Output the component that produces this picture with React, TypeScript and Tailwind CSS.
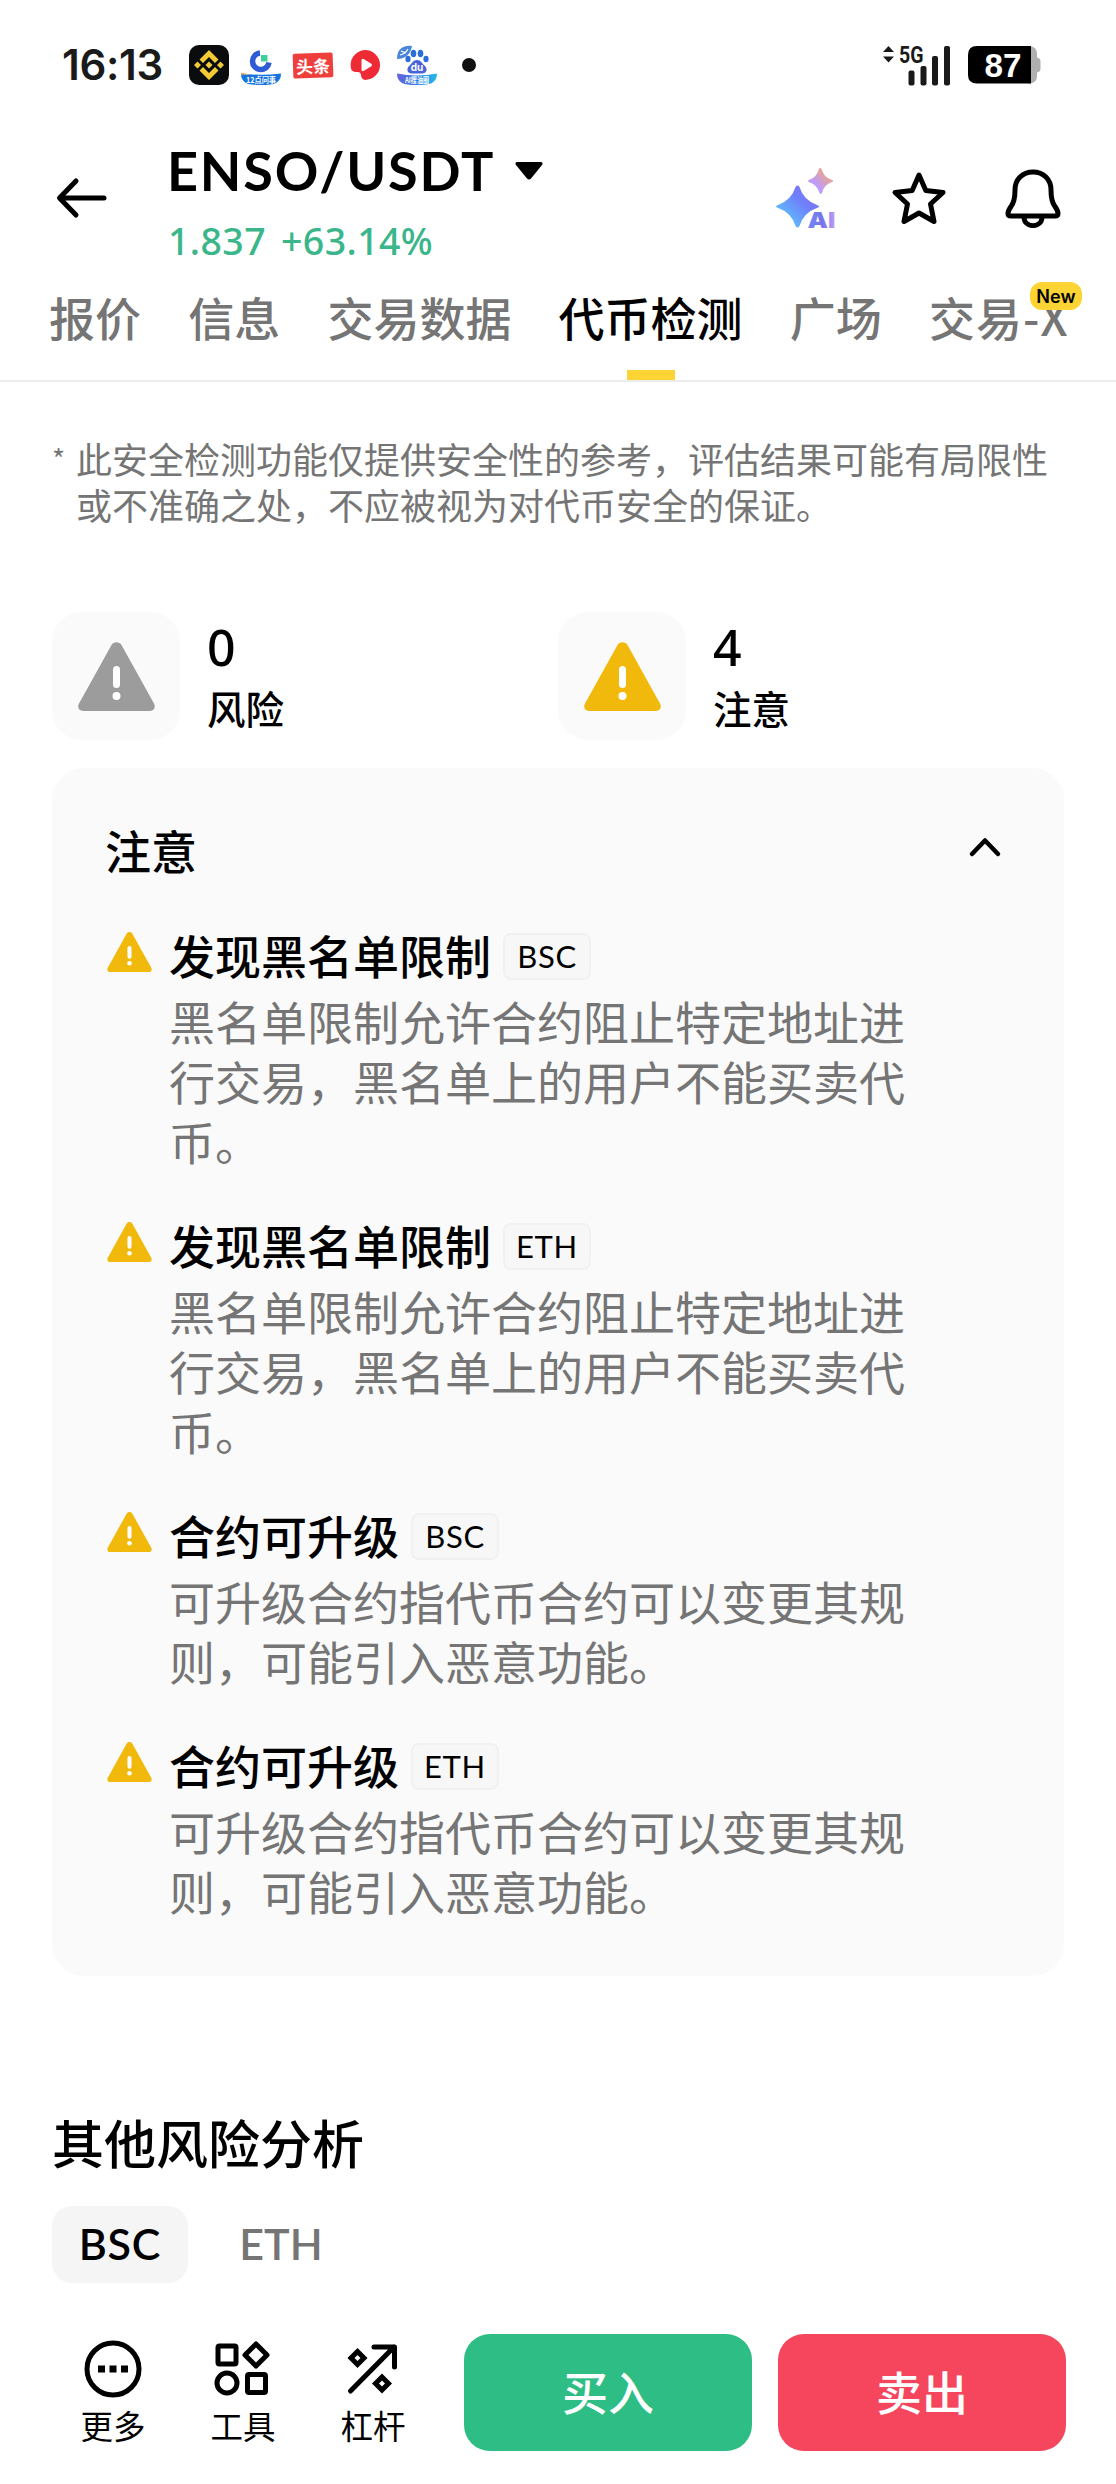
// Token safety check page for a trading pair: status bar, pair header,
// section tabs, the risk / attention summary and the bottom trade bar.

import type { ReactNode } from "react";

type Finding = {
  title: string;
  chain: "BSC" | "ETH";
  lines: string[];
};

const BLACKLIST = ["黑名单限制允许合约阻止特定地址进", "行交易，黑名单上的用户不能买卖代", "币。"];
const UPGRADABLE = ["可升级合约指代币合约可以变更其规", "则，可能引入恶意功能。"];

const FINDINGS: Finding[] = [
  { title: "发现黑名单限制", chain: "BSC", lines: BLACKLIST },
  { title: "发现黑名单限制", chain: "ETH", lines: BLACKLIST },
  { title: "合约可升级", chain: "BSC", lines: UPGRADABLE },
  { title: "合约可升级", chain: "ETH", lines: UPGRADABLE },
];

const TABS: Array<{ label: string; active?: boolean; badge?: string }> = [
  { label: "报价" },
  { label: "信息" },
  { label: "交易数据" },
  { label: "代币检测", active: true },
  { label: "广场" },
  { label: "交易-X", badge: "New" },
];

export default function App() {
  return (
    <div className="flex h-[2484px] w-[1116px] flex-col overflow-hidden bg-white font-['Noto_Sans_CJK_SC',sans-serif] text-black">
      <StatusBar />
      <PairHeader />
      <TabBar />
      <main className="flex flex-1 flex-col px-[52px]">
        <Notice />
        <div className="mt-[85px] grid grid-cols-2">
          <Summary count="0" label="风险" tone="text-[#9c9c9c]" />
          <Summary count="4" label="注意" tone="text-[#f0b90b]" />
        </div>
        <FindingPanel />
        <h2 className="mt-[136px] text-[52px] leading-[60px] font-medium">其他风险分析</h2>
        <div className="mt-[34px] flex items-center gap-[27px] font-['Lato',sans-serif] text-[43px] font-semibold">
          <span className="flex h-[77px] w-[136px] items-center justify-center rounded-[20px] bg-[#f5f5f5] tracking-[0.800px]">
            BSC
          </span>
          <span className="flex h-[77px] w-[132px] items-center justify-center text-[#757575]">ETH</span>
        </div>
      </main>
      <TradeBar />
    </div>
  );
}

function StatusBar() {
  return (
    <div className="flex h-[130px] items-center pr-[75px] pl-[62px]">
      <span className="w-[127px] font-['Inter',sans-serif] text-[42px] leading-none font-semibold tracking-[-0.3px] text-[#1a1a1a]">
        16:13
      </span>
      <BinanceIcon />
      <RingIcon />
      <span className="ml-3 flex h-[25px] w-10 -rotate-2 items-center justify-center rounded-[2px] bg-[#ee3f3d] text-[17px] leading-none font-bold text-white">
        头条
      </span>
      <PlayIcon />
      <BaiduIcon />
      <span className="ml-[25px] size-[14px] rounded-full bg-[#111]" />
      <SignalIcon />
      <BatteryIcon />
    </div>
  );
}

function PairHeader() {
  return (
    <header className="flex h-[136px] items-center pr-[53px] pl-[54px]">
      <svg width="56" height="48" viewBox="0 0 56 48" fill="none" stroke="currentColor" strokeWidth="5" strokeLinecap="round" strokeLinejoin="round">
        <path d="M50 24H6M22 7L5.500 24L22 41" />
      </svg>
      <div className="ml-[57px] flex flex-col gap-[18px] pt-2">
        <div className="flex items-center">
          <h1 className="font-['Lato',sans-serif] text-[54px] leading-[60px] font-bold tracking-[1.8px]">ENSO/USDT</h1>
          <svg className="ml-[20px]" width="28" height="18" viewBox="0 0 28 18" fill="currentColor">
            <path d="M2 0H26Q28.500 .5 27 3L16 16.500Q14 18.500 12 16.500L1 3Q-.5 .5 2 0Z" />
          </svg>
        </div>
        <div className="flex gap-[15px] pl-px font-['Noto_Sans',sans-serif] text-[37.500px] leading-[44px] font-medium tracking-[0.400px] text-[#3bb68a]">
          <span>1.837</span>
          <span>+63.14%</span>
        </div>
      </div>
      <div className="ml-auto flex items-center">
        <SparkIcon />
        <svg className="ml-[53px]" width="56" height="56" viewBox="0 0 56 56" fill="none" stroke="currentColor" strokeWidth="5" strokeLinejoin="round">
          <path d="M28 5L34.800 20.500L52 22.500L39.500 34L43 51.500L28 43L13 51.500L16.500 34L4 22.500L21.200 20.500Z" />
        </svg>
        <svg className="ml-[56px]" width="60" height="60" viewBox="0 0 60 60" fill="none" stroke="currentColor" strokeWidth="5" strokeLinejoin="round">
          <path d="M30 4C19.500 4 12 11.500 12 22C12 29 11.500 34 8 38.500C5.500 42 5 43 5 45.500Q5 48 8 48H52Q55 48 55 45.500C55 43 54.500 42 52 38.500C48.500 34 48 29 48 22C48 11.500 40.500 4 30 4Z" />
          <path d="M21 49C21 60.500 39 60.500 39 49" />
        </svg>
      </div>
    </header>
  );
}

function TabBar() {
  return (
    <nav className="flex h-[116px] gap-[47.200px] border-b-2 border-[#ededed] pt-[20px] pl-[49px] whitespace-nowrap">
      {TABS.map((tab) => (
        <div key={tab.label} className="relative flex flex-col items-center justify-between">
          <span
            className={`text-[46px] leading-[60px] font-medium ${tab.active ? "text-black" : "text-[#757575]"} ${tab.badge ? "tracking-[1px]" : ""}`}
          >
            {tab.label}
          </span>
          {tab.active && <span className="h-[10px] w-12 bg-[#fcd535]" />}
          {tab.badge && (
            <span className="absolute -top-[4px] left-[101px] flex h-7 w-[52px] items-center justify-center rounded-[12px] bg-[#fcd535] font-['Inter',sans-serif] text-[18px] font-semibold text-black">
              {tab.badge}
            </span>
          )}
        </div>
      ))}
    </nav>
  );
}

function Notice() {
  return (
    <div className="mt-[53px] flex gap-[14px] text-[36px] leading-[46px] text-[#757575]">
      <span className="w-[10px] text-[28px] leading-[46px]">*</span>
      <p className="whitespace-nowrap">
        此安全检测功能仅提供安全性的参考，评估结果可能有局限性
        <br />
        或不准确之处，不应被视为对代币安全的保证。
      </p>
    </div>
  );
}

function Summary({ count, label, tone }: { count: string; label: string; tone: string }) {
  return (
    <div className="flex items-center gap-[27px]">
      <div className={`flex size-32 items-center justify-center rounded-[30px] bg-[#fafafa] ${tone}`}>
        <WarningTriangle className="h-[69px] w-[77px]" />
      </div>
      <div className="flex flex-col pt-[2px]">
        <span className="font-['Noto_Sans',sans-serif] text-[50px] leading-[60px] font-medium">{count}</span>
        <span className="text-[38.500px] leading-[60px] font-medium">{label}</span>
      </div>
    </div>
  );
}

function FindingPanel() {
  return (
    <section className="mt-[28px] h-[1208px] rounded-[32px] bg-[#fafafa] pt-[51px] pr-[62px] pl-[53px]">
      <div className="flex items-center justify-between">
        <h2 className="text-[46px] leading-[60px] font-medium">注意</h2>
        <svg width="34" height="24" viewBox="0 0 34 24" fill="none" stroke="currentColor" strokeWidth="4.500" strokeLinecap="round" strokeLinejoin="round">
          <path d="M4 17L17 3.500L30 17" />
        </svg>
      </div>
      <ul className="mt-[45px] flex flex-col gap-[44px]">
        {FINDINGS.map((finding, i) => (
          <li key={i} className="flex gap-[17px]">
            <WarningTriangle className="mt-[8px] ml-[2px] h-[40px] w-[45px] text-[#f0b90b]" />
            <div className="flex flex-col gap-[6px]">
              <div className="flex items-center gap-[12px]">
                <h3 className="text-[46px] leading-[60px] font-medium">{finding.title}</h3>
                <span className="mt-1 flex h-[47px] w-[88px] items-center justify-center rounded-[8px] border-2 border-[#f1f1f1] bg-[#f7f7f7] pt-px font-['Lato',sans-serif] text-[31px] leading-none tracking-[0.700px]">
                  {finding.chain}
                </span>
              </div>
              <p className="text-[46px] leading-[60px] text-[#757575]">
                {finding.lines.map((line) => (
                  <span key={line} className="block">
                    {line}
                  </span>
                ))}
              </p>
            </div>
          </li>
        ))}
      </ul>
    </section>
  );
}

function TradeBar() {
  return (
    <footer className="flex h-[184px] pt-[34px] pl-[48px]">
      <BarAction label="更多">
        <circle cx="30" cy="30" r="26" />
        <path d="M15 26.500h7v7h-7zM26.500 26.500h7v7h-7zM38 26.500h7v7h-7z" fill="currentColor" stroke="none" />
      </BarAction>
      <BarAction label="工具">
        <rect x="5" y="7" width="18" height="18" rx="1.500" />
        <path d="M43 5L54 16L43 27L32 16Z" />
        <circle cx="14" cy="44" r="10" />
        <rect x="34.500" y="35.500" width="18" height="18" rx="1.500" />
      </BarAction>
      <BarAction label="杠杆">
        <path d="M7.500 52L51 8M31 8H51.500V28" strokeLinecap="round" />
        <path d="M14.500 12.500L21 19L14.500 25.500L8 19ZM39 38L45.500 44.500L39 51L32.500 44.500Z" strokeLinejoin="miter" />
      </BarAction>
      <button className="ml-[26px] h-[117px] w-[288px] rounded-[26px] bg-[#2ebd85] pb-[5px] text-[46px] font-medium text-white">买入</button>
      <button className="ml-[26px] h-[117px] w-[288px] rounded-[26px] bg-[#f6465d] pb-[5px] text-[46px] font-medium text-white">卖出</button>
    </footer>
  );
}

function BarAction({ label, children }: { label: string; children: ReactNode }) {
  return (
    <div className="flex w-[130px] flex-col items-center pt-[5px]">
      <svg width="60" height="60" viewBox="0 0 60 60" fill="none" stroke="currentColor" strokeWidth="5" strokeLinejoin="round">
        {children}
      </svg>
      <span className="mt-[4px] text-[32.500px] leading-[44px]">{label}</span>
    </div>
  );
}

function WarningTriangle({ className }: { className: string }) {
  return (
    <svg className={className} viewBox="0 0 77 69" fill="none">
      <path
        d="M33.500 3C35.500-.8 41.500-.8 43.500 3L76 61.500C78 65.500 76 69 72 69H5C1 69-1 65.500 1 61.500Z"
        fill="currentColor"
      />
      <path d="M38.500 27.500V42.500" stroke="#fff" strokeWidth="7" strokeLinecap="round" />
      <circle cx="38.500" cy="54" r="4" fill="#fff" />
    </svg>
  );
}

function SparkIcon() {
  return (
    <svg width="64" height="64" viewBox="0 0 64 64">
      <defs>
        <linearGradient id="sparkBig" x1="0" y1="1" x2="1" y2="0">
          <stop offset="0.150" stopColor="#5cc4fb" />
          <stop offset="0.600" stopColor="#6f80fb" />
          <stop offset="1" stopColor="#8b6cf5" />
        </linearGradient>
        <linearGradient id="sparkSmall" x1="0" y1="1" x2="1" y2="0">
          <stop offset="0.350" stopColor="#bf9bfb" />
          <stop offset="0.750" stopColor="#e9a58f" />
        </linearGradient>
        <linearGradient id="sparkText" x1="0" y1="0" x2="1" y2="0">
          <stop offset="0" stopColor="#6c8bf8" />
          <stop offset="0.550" stopColor="#7b72ea" />
          <stop offset="1" stopColor="#c3a0f6" />
        </linearGradient>
      </defs>
      <path d="M23.500 19.500Q25 19.500 25.500 21Q29.500 34.500 44 39.500Q46 40.500 44 41.500Q29.500 46.500 25.500 60Q23.500 63 21.500 60Q17.500 46.500 3 41.500Q1 40.500 3 39.500Q17.500 34.500 21.500 21Q22 19.500 23.500 19.500Z" fill="url(#sparkBig)" />
      <path d="M46 2Q47.500 2 48 4Q50 11.500 58 14Q60.500 15 58 16Q50 18.500 48 27Q46.500 29 45.500 27Q43 18.500 35 16Q33 15 35 14Q42.500 11.500 44.500 4Q45 2 46 2Z" fill="url(#sparkSmall)" />
      <text x="33.500" y="62" fontFamily="Inter, sans-serif" fontSize="22" fontWeight="900" textLength="28" lengthAdjust="spacingAndGlyphs" fill="url(#sparkText)">
        AI
      </text>
    </svg>
  );
}

function BinanceIcon() {
  return (
    <svg width="40" height="40" viewBox="0 0 40 40">
      <rect width="40" height="40" rx="10" fill="#0b0c0e" />
      <path
        fill="#f3cb35"
        d="M20 5L29.500 14.500L26 18L20 12L14 18L10.500 14.500ZM20 35L10.500 25.500L14 22L20 28L26 22L29.500 25.500ZM20 16.500L23.500 20L20 23.500L16.500 20ZM8.500 16.500L12 20L8.500 23.500L5 20ZM31.500 16.500L35 20L31.500 23.500L28 20Z"
      />
    </svg>
  );
}

function RingIcon() {
  return (
    <svg className="ml-3" width="40" height="40" viewBox="0 0 40 40">
      <path d="M19 8A8.300 8.300 0 1 0 28 17.500" fill="none" stroke="#2f5bd7" strokeWidth="5.500" />
      <rect x="20" y="10" width="6.500" height="6.500" fill="#3fcf9b" />
      <path d="M0 28.500Q20 31 40 28.500Q40 35 35 38Q31 40 20 40Q9 40 5 38Q0 35 0 28.500Z" fill="#1673dd" />
      <path d="M0 27.500Q4 27.500 9 30L0 29.500Z" fill="#f2b36f" />
      <text x="5" y="38" fontFamily="'Noto Sans CJK SC', sans-serif" fontSize="7.500" fontWeight="700" textLength="30" lengthAdjust="spacingAndGlyphs" fill="#fff">
        12点问事
      </text>
    </svg>
  );
}

function PlayIcon() {
  return (
    <svg className="ml-[17px]" width="30" height="30" viewBox="0 0 30 30">
      <path d="M15 0A15 15 0 1 1 15 30Q11 29 11 25Q10.500 21.500 7 22Q3 22.500 1.500 20A15 15 0 0 1 15 0Z" fill="#ee2a35" />
      <path d="M11.500 10.500Q11.500 8 14 9.200L21 13.500Q23 15 21 16.500L14 20.800Q11.500 22 11.500 19.500Z" fill="#fff" />
    </svg>
  );
}

function BaiduIcon() {
  return (
    <svg className="ml-[17px]" width="40" height="40" viewBox="0 0 40 40">
      <defs>
        <linearGradient id="baiduBand" x1="0" y1="0" x2="1" y2="0">
          <stop offset="0" stopColor="#6a62dc" />
          <stop offset="0.500" stopColor="#2f7fe4" />
          <stop offset="1" stopColor="#25b9e6" />
        </linearGradient>
      </defs>
      <path d="M0 14C0 5 5 0 15 1C14 8 9 14 0 14Z" fill="#4c86d8" />
      <path d="M3 10Q8 9 11 4M4 6L9 8" stroke="#fff" strokeWidth="1.200" fill="none" />
      <g fill="#2b6ddb">
        <ellipse cx="16.500" cy="8.500" rx="2.800" ry="3.800" />
        <ellipse cx="23.500" cy="8.500" rx="2.800" ry="3.800" />
        <ellipse cx="11" cy="14" rx="2.600" ry="3.200" />
        <ellipse cx="29" cy="14" rx="2.600" ry="3.200" />
        <path d="M20 15C24 15 25 18.500 27.500 20.500C31 23.500 30 28.500 25 28.500H15C10 28.500 9 23.500 12.500 20.500C15 18.500 16 15 20 15Z" fill="#4a62d8" />
      </g>
      <text x="20" y="26" textAnchor="middle" fontFamily="Inter, sans-serif" fontSize="10" fontWeight="700" fill="#fff">
        du
      </text>
      <path d="M0 28.500Q20 32.500 40 28.500Q40 35 35 38Q31 40 20 40Q9 40 5 38Q0 35 0 28.500Z" fill="url(#baiduBand)" />
      <text x="8" y="38" fontFamily="'Noto Sans CJK SC', sans-serif" fontSize="7.500" fontWeight="700" textLength="24" lengthAdjust="spacingAndGlyphs" fill="#fff">
        AI搜油圈
      </text>
    </svg>
  );
}

function SignalIcon() {
  return (
    <svg className="ml-auto" width="70" height="42" viewBox="0 0 70 42" fill="#1a1a1a">
      <path d="M7.500 2L13 8H2ZM7.500 18.500L13 12.500H2Z" />
      <text x="18" y="18.500" fontFamily="Roboto, sans-serif" fontSize="24" fontWeight="700" textLength="24.500" lengthAdjust="spacingAndGlyphs">
        5G
      </text>
      <rect x="27.500" y="26.500" width="6" height="15" rx="2" />
      <rect x="39.500" y="22" width="6" height="19.500" rx="2" />
      <rect x="51" y="12" width="6" height="29.500" rx="2" />
      <rect x="63" y="2" width="6" height="39.500" rx="2" />
    </svg>
  );
}

function BatteryIcon() {
  return (
    <svg className="ml-[17px]" width="73" height="38" viewBox="0 0 73 38">
      <path d="M60 0H62Q69 1 69 8V11.500Q72.500 12.500 72.500 15V23Q72.500 25.500 69 26.500V30Q69 37 62 37.500H60Z" fill="#b0b0b0" />
      <path d="M9 0H63V37.500H9Q0 37.500 0 29V9Q0 0 9 0Z" fill="#000" />
      <text x="35" y="31" textAnchor="middle" fontFamily="'Liberation Sans', sans-serif" fontSize="34" fontWeight="700" textLength="37" lengthAdjust="spacingAndGlyphs" fill="#fff">
        87
      </text>
    </svg>
  );
}
